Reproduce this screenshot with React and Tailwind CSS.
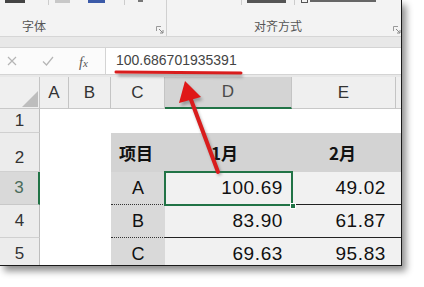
import React from "react";

const F = { fontFamily: '"Liberation Sans", "Noto Sans CJK SC", sans-serif' };

function ColHead({ label, active, last }) {
  return (
    <div
      className={
        "flex items-center justify-center text-[17px] " +
        (active
          ? "bg-[#d4d4d4] text-[#4b4b4b] border-b-2 border-[#217346] border-r border-r-[#c4c4c4]"
          : "bg-[#efefef] text-[#333] border-b border-[#c8c8c8] " + (last ? "" : "border-r border-r-[#c4c4c4]"))
      }
    >
      {label}
    </div>
  );
}

function RowHead({ n, active, align = "items-center" }) {
  return (
    <div
      className={
        "flex justify-center text-[17px] " +
        align +
        " " +
        (active
          ? "bg-[#d9d9d9] text-[#4a6b5a] border-r-2 border-[#217346] border-b border-b-[#c8c8c8]"
          : "bg-[#ececec] text-[#333] border-r border-[#bdbdbd] border-b border-b-[#d0d0d0]")
      }
    >
      {n}
    </div>
  );
}

export default function App() {
  return (
    <div className="relative w-[424px] h-[287px] bg-white overflow-hidden" style={F}>
      <div className="w-[402px] h-[266px] border-r border-b border-[#1a1a1a] shadow-[4px_5px_7px_rgba(0,0,0,0.45)] overflow-hidden flex flex-col bg-[#f3f3f3]">
        {/* Ribbon */}
        <div className="h-[37px] shrink-0 flex border-b border-[#d6d6d6] bg-[#f3f3f3]">
          <div className="w-[167px] relative border-r border-[#d0d0d0] flex flex-col">
            <div className="h-[4px] relative flex">
              <div className="absolute left-[5px] top-0 w-[20px] h-[3px] bg-[#444]" />
              <div className="absolute left-[48px] top-0 w-px h-[5px] bg-[#ccc]" />
              <div className="absolute left-[55px] top-0 w-[15px] h-[3px] bg-[#c8c8c8]" />
              <div className="absolute left-[88px] top-0 w-[17px] h-[3px] bg-[#3b5aa8]" />
              <div className="absolute left-[124px] top-0 w-px h-[5px] bg-[#ccc]" />
              <div className="absolute left-[138px] top-0 w-[5px] h-[2px] bg-[#777]" />
            </div>
            <div className="flex-1 flex items-end pb-[4px] pl-[22px] text-[12px] text-[#555] leading-none">
              <span style={{ fontFamily: '"Noto Sans CJK SC", sans-serif' }}>字体</span>
            </div>
            <svg className="absolute left-[156px] top-[26px]" width="8" height="8" viewBox="0 0 8 8">
              <path d="M0.5 0.5 H5 M0.5 0.5 V5" stroke="#999" fill="none" />
              <path d="M3 3 L7 7 M7 4 V7 H4" stroke="#888" fill="none" />
            </svg>
          </div>
          <div className="flex-1 relative flex flex-col">
            <div className="h-[4px] relative">
              <div className="absolute left-[74px] top-0 w-px h-[5px] bg-[#ccc]" />
              <div className="absolute left-[80px] top-0 w-[39px] h-[3px] bg-[#555]" />
              <div className="absolute left-[127px] top-0 w-px h-[5px] bg-[#ccc]" />
              <div className="absolute left-[134px] top-0 w-[7px] h-[3px] border border-[#555] border-t-0" />
              <div className="absolute left-[143px] top-0 w-[66px] h-[2px] bg-[#666]" />
            </div>
            <div className="flex-1 flex items-end justify-start pb-[4px] pl-[87px] text-[12px] text-[#555] leading-none">
              <span style={{ fontFamily: '"Noto Sans CJK SC", sans-serif' }}>对齐方式</span>
            </div>
            <svg className="absolute left-[226px] top-[26px]" width="8" height="8" viewBox="0 0 8 8">
              <path d="M0.5 0.5 H5 M0.5 0.5 V5" stroke="#999" fill="none" />
              <path d="M3 3 L7 7 M7 4 V7 H4" stroke="#888" fill="none" />
            </svg>
          </div>
        </div>
        <div className="h-[10px] shrink-0 bg-[#e8e8e8]" />
        {/* Formula bar */}
        <div className="h-[28px] shrink-0 flex bg-white border-t border-b border-[#d4d4d4]">
          <div className="w-[106px] flex items-center border-r border-[#d4d4d4] bg-[#fbfbfb] relative">
            <svg className="absolute left-[7px] top-[8px]" width="10" height="10" viewBox="0 0 10 10">
              <path d="M1 1 L9 9 M9 1 L1 9" stroke="#b5b5b5" strokeWidth="1.2" />
            </svg>
            <svg className="absolute left-[42px] top-[8px]" width="12" height="10" viewBox="0 0 12 10">
              <path d="M1 5.5 L4.5 9 L11 1" stroke="#b5b5b5" strokeWidth="1.2" fill="none" />
            </svg>
            <span
              className="absolute left-[79px] top-[4px] text-[14px] italic text-[#555]"
              style={{ fontFamily: '"Liberation Serif", serif' }}
            >
              f<span className="text-[11px]">x</span>
            </span>
          </div>
          <div className="flex-1 flex items-center pl-[10px] pb-[2px] text-[14px] text-[#444]">100.686701935391</div>
        </div>
        <div className="h-[2px] shrink-0 bg-[#e8e8e8]" />
        {/* Grid */}
        <div className="shrink-0 grid grid-cols-[40px_29px_42px_54px_127px_104px_1fr] grid-rows-[32px_24px_39px_33px_33px_33px] bg-white">
          {/* header row */}
          <div className="relative bg-[#efefef] border-r border-[#c4c4c4] border-b border-b-[#c8c8c8]">
            <svg className="absolute left-[22px] top-[14px]" width="16" height="16" viewBox="0 0 16 16">
              <path d="M16 0 L16 16 L0 16 Z" fill="#bdbdbd" />
            </svg>
          </div>
          <ColHead label="A" />
          <ColHead label="B" />
          <ColHead label="C" />
          <ColHead label="D" active />
          <ColHead label="E" />
          <div className="bg-[#efefef] border-b border-[#c8c8c8]" />

          {/* row 1 */}
          <RowHead n="1" />
          <div className="col-span-6" />

          {/* row 2 */}
          <RowHead n="2" align="items-end pb-[1px]" />
          <div className="col-span-2" />
          <div
            className="col-span-4 bg-[#d3d3d3] grid grid-cols-[54px_127px_1fr] items-center text-[17px] font-bold text-[#111]"
            style={{ fontFamily: '"Noto Sans CJK SC", sans-serif' }}
          >
            <div className="pl-[8px]">项目</div>
            <div className="pl-[46px]">1月</div>
            <div className="pl-[37px]">2月</div>
          </div>

          {/* row 3 */}
          <RowHead n="3" active />
          <div className="col-span-2" />
          <div className="bg-[#d9d9d9] flex items-center justify-center text-[18px] text-[#111] border-b border-dotted border-[#333]">A</div>
          <div className="relative bg-[#f1f1f1] flex items-center justify-end pr-[9px] text-[19px] tracking-[0.6px] text-[#111]">
            100.69
            <div className="absolute -left-px -top-px -right-px -bottom-px border-2 border-[#217346]" />
            <div className="absolute right-[-4px] bottom-[-4px] w-[6px] h-[6px] bg-[#217346] border border-white" />
          </div>
          <div className="col-span-2 bg-[#f1f1f1] border-b border-[#222] flex items-center text-[19px] tracking-[0.6px] text-[#111]">
            <div className="w-[104px] text-right pr-[10px]">49.02</div>
          </div>

          {/* row 4 */}
          <RowHead n="4" />
          <div className="col-span-2" />
          <div className="bg-[#d9d9d9] flex items-center justify-center text-[18px] text-[#111] border-b border-dotted border-[#333]">B</div>
          <div className="bg-[#f1f1f1] border-b border-[#222] flex items-center justify-end pr-[9px] text-[19px] tracking-[0.6px] text-[#111]">83.90</div>
          <div className="col-span-2 bg-[#f1f1f1] border-b border-[#222] flex items-center text-[19px] tracking-[0.6px] text-[#111]">
            <div className="w-[104px] text-right pr-[10px]">61.87</div>
          </div>

          {/* row 5 */}
          <RowHead n="5" />
          <div className="col-span-2" />
          <div className="bg-[#d9d9d9] flex items-center justify-center text-[18px] text-[#111]">C</div>
          <div className="bg-[#f1f1f1] flex items-center justify-end pr-[9px] text-[19px] tracking-[0.6px] text-[#111]">69.63</div>
          <div className="col-span-2 bg-[#f1f1f1] flex items-center text-[19px] tracking-[0.6px] text-[#111]">
            <div className="w-[104px] text-right pr-[10px]">95.83</div>
          </div>
        </div>
      </div>

      {/* annotation overlay */}
      <svg className="absolute left-0 top-0 pointer-events-none" width="424" height="287" viewBox="0 0 424 287">
        <defs>
          <filter id="sh" x="-20%" y="-20%" width="140%" height="140%">
            <feGaussianBlur stdDeviation="1.5" />
          </filter>
        </defs>
        <g opacity="0.45" filter="url(#sh)" transform="translate(2 3)">
          <path d="M116 72 L241 73" stroke="#555" strokeWidth="3" />
          <path d="M218 172 L189 96" stroke="#555" strokeWidth="4" />
          <path d="M185 81 L179 103 L201 97 Z" fill="#555" />
        </g>
        <path d="M116 72 L241 73" stroke="#d91d1d" strokeWidth="3" strokeLinecap="round" />
        <path d="M218 172 L190 97" stroke="#d91d1d" strokeWidth="4" strokeLinecap="round" />
        <path d="M185 81 L179 103 L201 97 Z" fill="#e01818" />
      </svg>
    </div>
  );
}
